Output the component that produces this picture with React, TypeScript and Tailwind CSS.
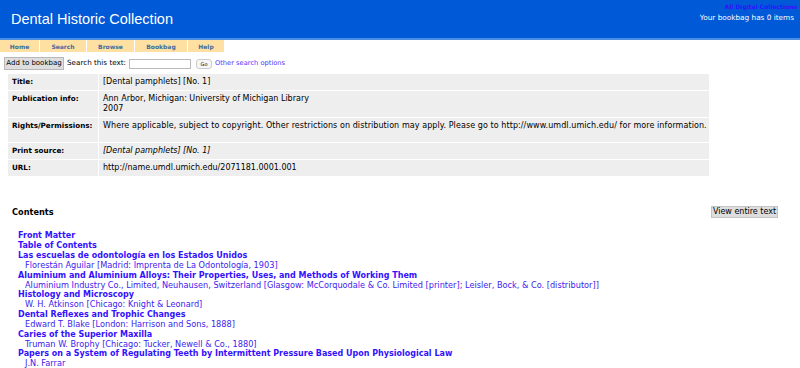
import React from "react";

const tabs = [
  { label: "Home", w: "w-[39px]" },
  { label: "Search", w: "w-[46px]" },
  { label: "Browse", w: "w-[47px]" },
  { label: "Bookbag", w: "w-[52px]" },
  { label: "Help", w: "w-[36px]" },
];

const rows: { label: string; value: React.ReactNode; h: string; wide?: boolean }[] = [
  { label: "Title:", value: "[Dental pamphlets] [No. 1]", h: "h-[16px]" },
  {
    label: "Publication info:",
    value: (
      <>
        Ann Arbor, Michigan: University of Michigan Library
        <br />
        2007
      </>
    ),
    h: "h-[26px]",
  },
  {
    label: "Rights/Permissions:",
    value:
      "Where applicable, subject to copyright. Other restrictions on distribution may apply. Please go to http://www.umdl.umich.edu/ for more information.",
    h: "h-[24px]",
    wide: true,
  },
  { label: "Print source:", value: <i>[Dental pamphlets] [No. 1]</i>, h: "h-[16px]" },
  { label: "URL:", value: "http://name.umdl.umich.edu/2071181.0001.001", h: "h-[16px]" },
];

const contents: { title: string; author?: string }[] = [
  { title: "Front Matter" },
  { title: "Table of Contents" },
  {
    title: "Las escuelas de odontología en los Estados Unidos",
    author: "Florestán Aguilar [Madrid: Imprenta de La Odontología, 1903]",
  },
  {
    title: "Aluminium and Aluminium Alloys: Their Properties, Uses, and Methods of Working Them",
    author:
      "Aluminium Industry Co., Limited, Neuhausen, Switzerland [Glasgow: McCorquodale & Co. Limited [printer]; Leisler, Bock, & Co. [distributor]]",
  },
  { title: "Histology and Microscopy", author: "W. H. Atkinson [Chicago: Knight & Leonard]" },
  { title: "Dental Reflexes and Trophic Changes", author: "Edward T. Blake [London: Harrison and Sons, 1888]" },
  { title: "Caries of the Superior Maxilla", author: "Truman W. Brophy [Chicago: Tucker, Newell & Co., 1880]" },
  {
    title: "Papers on a System of Regulating Teeth by Intermittent Pressure Based Upon Physiological Law",
    author: "J.N. Farrar",
  },
];

export default function App() {
  return (
    <div className="w-[800px] h-[368px] overflow-hidden bg-white text-black" style={{ fontFamily: '"DejaVu Sans", Verdana, sans-serif' }}>
      <header className="h-[40px] bg-[#0059d6] border-b-2 border-[#4a8fe6] flex justify-between">
        <div className="pl-[11px] pt-[10px] text-white text-[14.5px] leading-[18px]" style={{ fontFamily: '"Liberation Sans", Arial, sans-serif' }}>
          Dental Historic Collection
        </div>
        <div className="flex flex-col items-end pr-[3px] pt-[3px]">
          <a className="text-[6px] leading-[8px] font-bold text-[#3311ff]">All Digital Collections</a>
          <div className="text-white text-[7.3px] leading-[10px] mt-[2px] pr-[3px]">Your bookbag has 0 items</div>
        </div>
      </header>

      <nav className="flex gap-[1px] h-[12px]">
        {tabs.map((t) => (
          <div key={t.label} className={`${t.w} bg-[#ffe0a3] flex items-center justify-center text-[6px] font-bold text-[#456c9c]`}>
            {t.label}
          </div>
        ))}
      </nav>

      <div className="flex items-center mt-[5px] ml-[4px] h-[13px] text-[7px]">
        <button className="h-[13px] w-[60px] bg-[#dedede] border border-[#b8b8b8] text-[7px] leading-[11px]">Add to bookbag</button>
        <span className="ml-[3px] text-[7.2px]">Search this text:</span>
        <input className="ml-[3px] w-[62px] h-[10px] border border-[#bbb] bg-white" />
        <button className="ml-[5px] h-[10px] w-[16px] border border-[#ccc] rounded-[3px] bg-[#f6f6f6] text-[5px] leading-[8px]">Go</button>
        <a className="ml-[3px] text-[6.7px] text-[#5533ff]">Other search options</a>
      </div>

      <div className="ml-[8px] mt-[4px] w-[701px] flex flex-col gap-[1px]">
        {rows.map((r) => (
          <div key={r.label} className={`flex gap-[1px] ${r.h}`}>
            <div className="w-[90px] shrink-0 bg-[#eeeeee] pl-[4px] pt-[3px] text-[7.2px] leading-[10px] font-bold whitespace-nowrap">{r.label}</div>
            <div className={`flex-1 min-w-0 bg-[#eeeeee] pl-[4px] pt-[3px] text-[8px] leading-[10px] ${r.wide ? "whitespace-nowrap tracking-[0.08px]" : ""}`}>
              {r.value}
            </div>
          </div>
        ))}
      </div>

      <div className="flex justify-between items-center mt-[30px] pl-[12px] pr-[22px]">
        <div className="text-[8.2px] font-bold">Contents</div>
        <button className="h-[12px] w-[67px] bg-[#dedede] border border-[#c4c4c4] text-[8px] leading-[10px]">View entire text</button>
      </div>

      <div className="mt-[13px] pl-[18px] leading-[9.85px] text-[#3311ff]">
        {contents.map((c) => (
          <div key={c.title}>
            <div className="font-bold whitespace-nowrap text-[8px]">{c.title}</div>
            {c.author && <div className="pl-[7px] whitespace-nowrap text-[8.2px] text-[#3d22ee]">{c.author}</div>}
          </div>
        ))}
      </div>
    </div>
  );
}
